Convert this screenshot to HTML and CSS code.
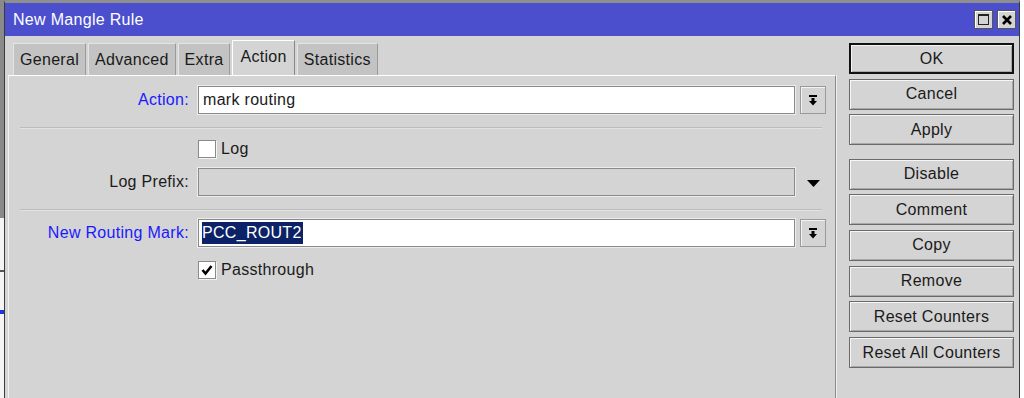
FILE: index.html
```html
<!DOCTYPE html>
<html lang="en">
<head>
    <meta charset="UTF-8">
    <title>New Mangle Rule</title>
    <link rel="stylesheet" href="styles.css">
</head>
<body>
    <div class="backdrop"></div>

    <div class="window">
        <div class="titlebar">
            <span class="title">New Mangle Rule</span>
            <div class="win-btns">
                <span class="wbtn"><span class="max-box"></span></span>
                <span class="wbtn">
                    <svg width="12" height="12" viewBox="0 0 12 12"><path d="M2 2 L10 10 M10 2 L2 10" stroke="#000" stroke-width="2.6"/></svg>
                </span>
            </div>
        </div>

        <div class="client">
            <div class="main">
                <div class="tabs">
                    <div class="tab">General</div>
                    <div class="tab">Advanced</div>
                    <div class="tab">Extra</div>
                    <div class="tab active">Action</div>
                    <div class="tab">Statistics</div>
                </div>

                <div class="panel">
                    <div class="row row-action">
                        <label class="lbl blue">Action:</label>
                        <div class="field">mark routing</div>
                        <span class="drop-btn">
                            <svg width="10" height="11" viewBox="0 0 10 11"><rect x="1" y="0" width="8" height="2" fill="#000"/><path d="M3.5 3 H6.5 V6 H9 L5 10.5 L1 6 H3.5 Z" fill="#000"/></svg>
                        </span>
                    </div>

                    <div class="sep sep-1"></div>

                    <div class="row row-log">
                        <span class="lbl"></span>
                        <div class="check-line">
                            <span class="checkbox"></span>
                            <span>Log</span>
                        </div>
                    </div>

                    <div class="row row-prefix">
                        <label class="lbl">Log Prefix:</label>
                        <div class="field disabled"></div>
                        <span class="drop-arrow">
                            <svg width="13" height="7" viewBox="0 0 13 7"><path d="M0 0 H13 L6.5 7 Z" fill="#000"/></svg>
                        </span>
                    </div>

                    <div class="sep sep-2"></div>

                    <div class="row row-mark">
                        <label class="lbl blue">New Routing Mark:</label>
                        <div class="field"><span class="selected">PCC_ROUT2</span></div>
                        <span class="drop-btn">
                            <svg width="10" height="11" viewBox="0 0 10 11"><rect x="1" y="0" width="8" height="2" fill="#000"/><path d="M3.5 3 H6.5 V6 H9 L5 10.5 L1 6 H3.5 Z" fill="#000"/></svg>
                        </span>
                    </div>

                    <div class="row row-pass">
                        <span class="lbl"></span>
                        <div class="check-line">
                            <span class="checkbox">
                                <svg width="14" height="14" viewBox="0 0 14 14"><path d="M2.5 7 L5.5 10.5 L11.5 3" stroke="#000" stroke-width="2.6" fill="none"/></svg>
                            </span>
                            <span>Passthrough</span>
                        </div>
                    </div>
                </div>
            </div>

            <div class="side">
                <button class="btn default">OK</button>
                <button class="btn">Cancel</button>
                <button class="btn">Apply</button>
                <button class="btn group-start">Disable</button>
                <button class="btn">Comment</button>
                <button class="btn">Copy</button>
                <button class="btn">Remove</button>
                <button class="btn">Reset Counters</button>
                <button class="btn">Reset All Counters</button>
            </div>
        </div>
    </div>

    <div class="gutter"></div>
</body>
</html>
```

FILE: styles.css
```css
body {
    margin: 0;
    width: 1024px;
    height: 398px;
    overflow: hidden;
    display: flex;
    background: #fff;
    font-family: "Liberation Sans", Arial, sans-serif;
    font-size: 16px;
    letter-spacing: 0.3px;
    color: #1a1a1a;
}

/* strip of the window behind */
.backdrop {
    width: 4px;
    background: linear-gradient(#8a8a8a 0 218px, #f4f4f4 218px 270px, #555 270px 272px, #f4f4f4 272px 310px, #2233dd 310px 314px, #f4f4f4 314px);
}
.gutter {
    width: 4px;
    background: #fff;
}

.window {
    flex: 1;
    display: flex;
    flex-direction: column;
    border-top: 3px solid #8e8e8e;
    border-left: 1px solid #3a3a3a;
    border-right: 1px solid #3a3a3a;
    background: #d4d4d4;
}

.titlebar {
    height: 33px;
    flex: none;
    display: flex;
    align-items: center;
    justify-content: space-between;
    padding: 0 3px 0 8px;
    background: #4b4fce;
    color: #fff;
}
.win-btns {
    display: flex;
    gap: 4px;
}
.wbtn {
    width: 19px;
    height: 19px;
    box-sizing: border-box;
    display: flex;
    align-items: center;
    justify-content: center;
    background: #d4d4d4;
    border: 1px solid #555;
    box-shadow: inset 1px 1px 0 #fff;
}
.max-box {
    width: 11px;
    height: 11px;
    box-sizing: border-box;
    border: 1px solid #222;
    border-top-width: 2px;
}

.client {
    flex: 1;
    display: flex;
    padding: 0 4px 0 3px;
}

.main {
    width: 828px;
    display: flex;
    flex-direction: column;
}

.tabs {
    display: flex;
    align-items: flex-end;
    gap: 2px;
    padding: 4px 0 0 5px;
    height: 35px;
}
.tab {
    height: 32px;
    box-sizing: border-box;
    padding: 0 6px;
    display: flex;
    align-items: center;
    background: #c3c3c3;
    border-top: 1px solid #e4e4e4;
    border-left: 1px solid #e4e4e4;
    border-right: 1px solid #9a9a9a;
}
.tab.active {
    height: 36px;
    margin-bottom: -1px;
    padding: 0 7px 4px;
    background: #d4d4d4;
    border-top: 1px solid #fff;
    border-left: 1px solid #fff;
    border-right: 1px solid #888;
}

.panel {
    flex: 1;
    border-top: 1px solid #fff;
    border-left: 1px solid #f2f2f2;
    border-right: 1px solid #8a8a8a;
    box-shadow: 1px 0 0 #f0f0f0;
    padding-top: 10px;
}

.row {
    display: grid;
    grid-template-columns: 180px 597px 22px;
    column-gap: 9px;
    align-items: center;
}
.row .drop-btn,
.row .drop-arrow {
    margin-left: -4px;
}
.row-action,
.row-prefix,
.row-mark {
    height: 28px;
}
.row-log,
.row-pass {
    height: 18px;
}
.row-log { margin-top: 11px; }
.row-prefix { margin-top: 10px; }
.row-mark { margin-top: 8px; }
.row-pass { margin-top: 14px; }

.lbl {
    text-align: right;
    color: #1b1b1b;
}
.lbl.blue {
    color: #1a1aff;
}

.field {
    height: 28px;
    box-sizing: border-box;
    display: flex;
    align-items: center;
    padding-left: 4px;
    background: #fff;
    border: 1px solid #8a8a8a;
    box-shadow: 0 0 0 1px #ececec;
}
.field.disabled {
    background: #d4d4d4;
}
.selected {
    background: #0b2266;
    color: #fff;
    padding: 2px 1px 2px 0;
    margin-left: -1px;
}

.drop-btn {
    height: 28px;
    box-sizing: border-box;
    display: flex;
    align-items: center;
    justify-content: center;
    border: 1px solid #9a9a9a;
    box-shadow: inset 1px 1px 0 #f2f2f2;
}
.drop-arrow {
    display: flex;
    justify-content: center;
    padding-top: 3px;
}

.sep {
    height: 1px;
    margin-left: 11px;
    width: 802px;
    background: #bcbcbc;
    border-bottom: 1px solid #e2e2e2;
}
.sep-1 { margin-top: 13px; }
.sep-2 { margin-top: 13px; }

.check-line {
    display: flex;
    align-items: center;
    gap: 5px;
}
.checkbox {
    width: 18px;
    height: 18px;
    box-sizing: border-box;
    display: flex;
    align-items: center;
    justify-content: center;
    background: #fff;
    border: 1px solid #8a8a8a;
    box-shadow: 1px 1px 0 #f4f4f4;
}

.side {
    width: 165px;
    margin-left: 13px;
    padding-top: 7px;
    display: flex;
    flex-direction: column;
    gap: 4.7px;
}
.btn {
    height: 31px;
    box-sizing: border-box;
    font-family: inherit;
    font-size: 16px;
    letter-spacing: 0.3px;
    color: #1a1a1a;
    background: #d4d4d4;
    border: 1px solid #6a6a6a;
    box-shadow: inset 1px 1px 0 #f6f6f6, inset -1px -1px 0 #a8a8a8;
    padding: 0;
}
.btn.default {
    border: 2px solid #111;
}
.btn.group-start {
    margin-top: 8.5px;
}
```
